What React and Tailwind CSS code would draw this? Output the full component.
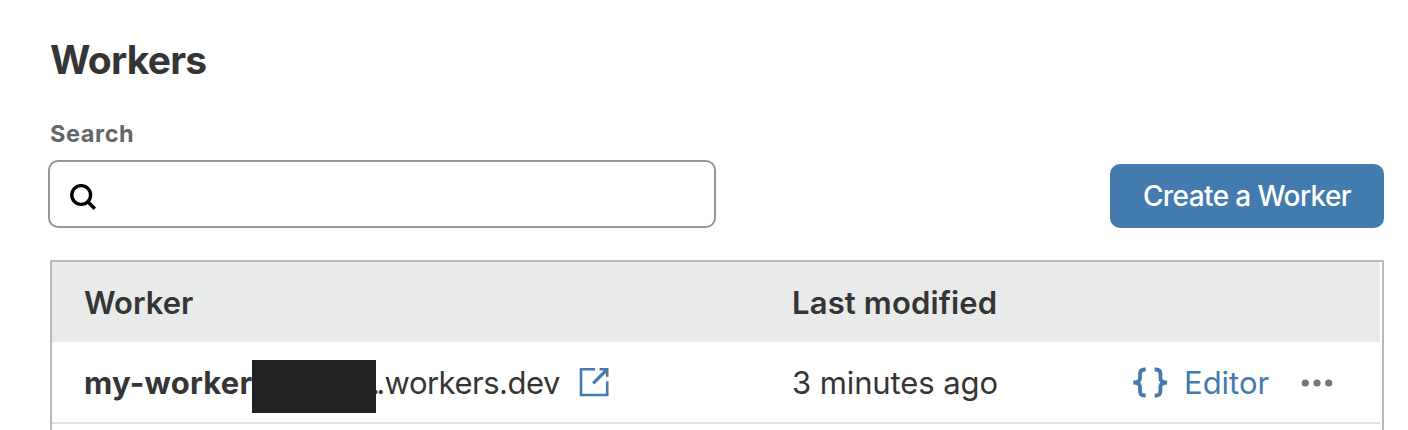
function SearchIcon() {
  return (
    <svg width="28" height="30" viewBox="0 0 28 30" fill="none" stroke="#000" strokeWidth="3.4">
      <circle cx="13.2" cy="15" r="9.4" />
      <path d="M19.6 21.5 26.8 28.7" />
    </svg>
  );
}

function ExternalIcon() {
  return (
    <svg width="32" height="32" viewBox="0 0 32 32" fill="none" stroke="#447bae" strokeWidth="2.6">
      <path d="M17 3.2H3V29H29.2V15.2" />
      <path d="M15.2 17.3 28 4.5" strokeWidth="3.2" />
      <path d="M21.5 3.2H29.2V10.8" />
    </svg>
  );
}

function BracesIcon() {
  return (
    <svg width="36" height="32" viewBox="0 0 36 32" fill="none" stroke="#447bae" strokeWidth="3.8">
      <path d="M13.7 2.5H12.5Q8 2.5 8 7V11Q8 15.5 1.3 15.5Q8 15.5 8 20V24Q8 28.5 12.5 28.5H13.7" />
      <path d="M22.7 2.5H23.9Q28.4 2.5 28.4 7V11Q28.4 15.5 35.1 15.5Q28.4 15.5 28.4 20V24Q28.4 28.5 23.9 28.5H22.7" />
    </svg>
  );
}

function MoreIcon() {
  return (
    <svg width="32" height="8" viewBox="0 0 32 8" fill="#73767a">
      <circle cx="4.3" cy="4" r="3.6" />
      <circle cx="16" cy="4" r="3.6" />
      <circle cx="27.7" cy="4" r="3.6" />
    </svg>
  );
}

export default function App() {
  return (
    <main className="h-[430px] w-full overflow-hidden bg-white pl-12 pr-6 font-['Inter',sans-serif] text-[#353535]">
      <h1 className="pt-9 pl-0.5 text-[39px] leading-[48px] font-bold tracking-[-0.75px]">Workers</h1>
      <div className="mt-[34px] flex items-end justify-between">
        <div className="w-[668px]">
          <label className="block pl-0.5 text-[23.5px] leading-8 font-bold tracking-[0.6px] text-[#62676a]">Search</label>
          <div className="mt-[10px] flex h-[68px] items-center rounded-[10px] border-2 border-[#92979b] pt-px pl-[18px]">
            <SearchIcon />
          </div>
        </div>
        <button className="flex h-16 w-[274px] items-center justify-center rounded-[10px] bg-[#447bae] text-[28px] font-medium tracking-[-0.6px] text-white">Create a Worker</button>
      </div>
      <section className="mt-8 ml-0.5 h-[200px] border-2 border-[#b6bbbf] pr-0.5 text-[31px]">
        <div className="flex h-20 items-center bg-[#e9ebea] pt-0.5 pl-8 font-semibold">
          <span className="w-[708px]">Worker</span>
          <span className="tracking-[0.15px]">Last modified</span>
        </div>
        <div className="flex h-[82px] items-center border-b-2 border-[#e2e3e3] pl-8">
          <div className="flex w-[708px] items-center whitespace-nowrap">
            <span className="w-[168px] pt-0.5 font-bold tracking-[0.25px]">my-worker</span>
            <span className="relative z-10 mt-[9px] h-[53px] w-[124px] bg-[#222]" />
            <span className="-ml-[5px] w-[206.5px] pt-0.5 tracking-[-0.5px]"><span className="tracking-[-3.8px]">.</span>.workers.dev</span>
            <ExternalIcon />
          </div>
          <span className="w-[340px] pt-0.5 tracking-[-0.1px]">3 minutes ago</span>
          <span className="pt-px"><BracesIcon /></span>
          <span className="ml-4 pt-0.5 text-[#447bae]">Editor</span>
          <span className="ml-8 pt-0.5"><MoreIcon /></span>
        </div>
      </section>
    </main>
  );
}
